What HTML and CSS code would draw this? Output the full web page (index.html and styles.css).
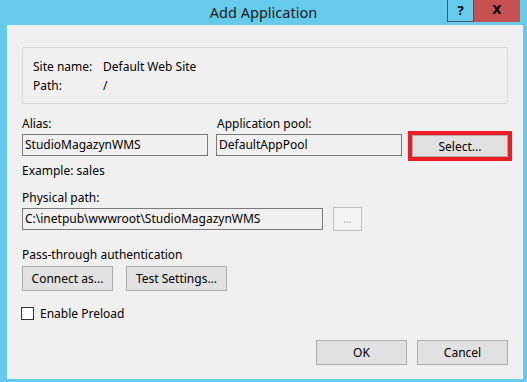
FILE: index.html
```html
<!DOCTYPE html>
<html lang="en">
<head>
    <meta charset="UTF-8">
    <title>Add Application</title>
    <link rel="stylesheet" href="styles.css">
</head>
<body>
    <div class="window">
        <!-- Title bar -->
        <div class="titlebar">
            <span></span>
            <span class="title">Add Application</span>
            <div class="controls">
                <span class="help-btn">?</span>
                <span class="close-btn">X</span>
            </div>
        </div>

        <div class="panel">
            <!-- Site info -->
            <div class="info-box">
                <div class="info-row"><span class="info-key">Site name:</span><span>Default Web Site</span></div>
                <div class="info-row"><span class="info-key">Path:</span><span>/</span></div>
            </div>

            <!-- Alias / pool -->
            <div class="alias-grid">
                <label>Alias:</label>
                <label>Application pool:</label>
                <span></span>
                <div class="field">StudioMagazynWMS</div>
                <div class="field">DefaultAppPool</div>
                <div class="highlight">
                    <button class="btn select-btn">Select...</button>
                </div>
            </div>
            <p class="hint">Example: sales</p>

            <!-- Physical path -->
            <label class="path-label">Physical path:</label>
            <div class="path-row">
                <div class="field path-field">C:\inetpub\wwwroot\StudioMagazynWMS</div>
                <button class="btn browse-btn" disabled>...</button>
            </div>

            <p class="auth-label">Pass-through authentication</p>
            <div class="auth-row">
                <button class="btn connect-btn">Connect as...</button>
                <button class="btn test-btn">Test Settings...</button>
            </div>

            <div class="check-row">
                <span class="checkbox"></span>
                <span>Enable Preload</span>
            </div>

            <div class="footer">
                <button class="btn">OK</button>
                <button class="btn">Cancel</button>
            </div>
        </div>
    </div>
</body>
</html>
```

FILE: styles.css
```css
body {
    margin: 0;
    font-family: "Noto Sans", "Open Sans", sans-serif;
    font-size: 12px;
    color: #000;
}

.window {
    width: 527px;
    height: 382px;
    background-color: #66cbea;
    display: flex;
    flex-direction: column;
}

.titlebar {
    height: 25px;
    display: grid;
    grid-template-columns: 1fr auto 1fr;
    align-items: start;
}

.title {
    font-size: 14.5px;
    line-height: 22px;
    color: #1a1a1a;
    padding-top: 1px;
}

.controls {
    justify-self: end;
    display: flex;
    margin-right: 7px;
}

.help-btn,
.close-btn {
    height: 22px;
    line-height: 20px;
    text-align: center;
    font-weight: bold;
    font-size: 13px;
    box-sizing: border-box;
}

.help-btn {
    width: 27px;
    border: 1px solid #3b5a6a;
    border-top: none;
}

.close-btn {
    width: 46px;
    background-color: #c75050;
    font-family: "DejaVu Sans", sans-serif;
    font-size: 12px;
}

.panel {
    flex: 1;
    margin: 0 4px 3px 7px;
    background-color: #f0f0f0;
    padding: 22px 15px 14px 15px;
    display: flex;
    flex-direction: column;
}

.info-box {
    border: 1px solid #dadada;
    border-radius: 2px;
    padding: 9px 10px 8px 10px;
}

.info-row {
    line-height: 19px;
    display: flex;
}

.info-key {
    width: 70px;
}

label,
p {
    display: block;
    line-height: 15px;
    margin: 0;
}

.alias-grid {
    margin-top: 12px;
    display: grid;
    grid-template-columns: 186px 186px 102px;
    column-gap: 8px;
    row-gap: 3px;
    align-items: start;
}

.alias-grid label:nth-child(2) {
    margin-left: 1px;
}

.field {
    height: 22px;
    line-height: 20px;
    box-sizing: border-box;
    border: 1px solid #7a7a7a;
    padding: 0 2px;
    white-space: nowrap;
    overflow: hidden;
}

.highlight {
    margin: -3px 0 -5px -2px;
    border: 4px solid #ed1c24;
    height: 30px;
    box-sizing: border-box;
    display: flex;
}

.btn {
    font-family: inherit;
    font-size: 12px;
    background-color: #e1e1e1;
    border: 1px solid #adadad;
    color: #000;
    padding: 0;
    height: 25px;
}

.select-btn {
    flex: 1;
    height: auto;
}

.hint {
    margin-top: 7px;
}

.path-label {
    margin-top: 12px;
}

.path-row {
    margin-top: 2px;
    display: flex;
    align-items: center;
    gap: 10px;
}

.path-field {
    width: 301px;
}

.browse-btn {
    width: 29px;
    height: 24px;
    background-color: #f4f4f4;
    border-color: #bfbfbf;
    color: #a0a0a0;
    font-size: 10px;
}

.auth-label {
    margin-top: 16px;
}

.auth-row {
    margin-top: 4px;
    display: flex;
    gap: 13px;
}

.connect-btn {
    width: 91px;
}

.test-btn {
    width: 101px;
}

.check-row {
    margin-top: 15px;
    display: flex;
    align-items: center;
    gap: 6px;
    line-height: 15px;
}

.checkbox {
    width: 13px;
    height: 13px;
    box-sizing: border-box;
    border: 1px solid #333;
    background-color: #fff;
    margin-left: -1px;
}

.footer {
    margin-top: auto;
    display: flex;
    justify-content: flex-end;
    gap: 10px;
}

.footer .btn {
    width: 91px;
}
```
